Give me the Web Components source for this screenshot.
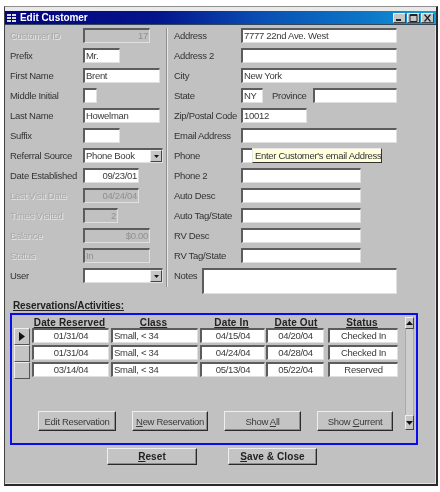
<!DOCTYPE html>
<html><head><meta charset="utf-8">
<style>
html,body{margin:0;padding:0;background:#fff;}
body{width:440px;height:492px;overflow:hidden;font-family:"Liberation Sans",Arial,sans-serif;font-size:9.5px;color:#333;}
</style></head><body>
<edit-window>
  <span slot="title">Edit Customer</span>
  <form-col slot="left">
    <form-row label="Customer ID" off><sunk-field w="67" align="right" off>17</sunk-field></form-row>
    <form-row label="Prefix"><sunk-field w="37">Mr.</sunk-field></form-row>
    <form-row label="First Name"><sunk-field w="77">Brent</sunk-field></form-row>
    <form-row label="Middle Initial"><sunk-field w="14"></sunk-field></form-row>
    <form-row label="Last Name"><sunk-field w="77">Howelman</sunk-field></form-row>
    <form-row label="Suffix"><sunk-field w="37"></sunk-field></form-row>
    <form-row label="Referral Source"><sunk-field w="80" combo>Phone Book</sunk-field></form-row>
    <form-row label="Date Established"><sunk-field w="56" align="right">09/23/01</sunk-field></form-row>
    <form-row label="Last Visit Date" off><sunk-field w="56" align="right" off>04/24/04</sunk-field></form-row>
    <form-row label="Times Visited" off><sunk-field w="35" align="right" off>2</sunk-field></form-row>
    <form-row label="Balance" off><sunk-field w="67" align="right" off>$0.00</sunk-field></form-row>
    <form-row label="Status" off><sunk-field w="67" off>In</sunk-field></form-row>
    <form-row label="User"><sunk-field w="80" combo></sunk-field></form-row>
  </form-col>
  <form-col slot="right">
    <form-row wide label="Address"><sunk-field w="156">7777 22nd Ave. West</sunk-field></form-row>
    <form-row wide label="Address 2"><sunk-field w="156"></sunk-field></form-row>
    <form-row wide label="City"><sunk-field w="156">New York</sunk-field></form-row>
    <form-row wide label="State"><sunk-field w="22">NY</sunk-field><span class="p" style="margin:0 8px 0 9px;width:33px">Province</span><sunk-field w="84"></sunk-field></form-row>
    <form-row wide label="Zip/Postal Code"><sunk-field w="66">10012</sunk-field></form-row>
    <form-row wide label="Email Address"><sunk-field w="156"></sunk-field></form-row>
    <form-row wide label="Phone"><sunk-field w="120"></sunk-field><tool-tip>Enter Customer's email Address</tool-tip></form-row>
    <form-row wide label="Phone 2"><sunk-field w="120"></sunk-field></form-row>
    <form-row wide label="Auto Desc"><sunk-field w="120"></sunk-field></form-row>
    <form-row wide label="Auto Tag/State"><sunk-field w="120"></sunk-field></form-row>
    <form-row wide label="RV Desc"><sunk-field w="120"></sunk-field></form-row>
    <form-row wide label="RV Tag/State"><sunk-field w="120"></sunk-field></form-row>
    <form-row notes label="Notes"><sunk-field w="195" h="26"></sunk-field></form-row>
  </form-col>
  <span slot="section">Reservations/Activities:</span>
  <res-panel slot="panel">
    <res-row slot="rows" sel d1="01/31/04" cls="Small, < 34" d2="04/15/04" d3="04/20/04" st="Checked In"></res-row>
    <res-row slot="rows" d1="01/31/04" cls="Small, < 34" d2="04/24/04" d3="04/28/04" st="Checked In"></res-row>
    <res-row slot="rows" d1="03/14/04" cls="Small, < 34" d2="05/13/04" d3="05/22/04" st="Reserved"></res-row>
    <raised-btn slot="btns" w="78" h="20"><span>Edit Reservation</span></raised-btn>
    <raised-btn slot="btns" w="76" h="20"><span><u>N</u>ew Reservation</span></raised-btn>
    <raised-btn slot="btns" w="77" h="20"><span>Show <u>A</u>ll</span></raised-btn>
    <raised-btn slot="btns" w="76" h="20"><span>Show <u>C</u>urrent</span></raised-btn>
  </res-panel>
  <raised-btn slot="foot" w="90" h="17" bold><span><u>R</u>eset</span></raised-btn>
  <raised-btn slot="foot" w="89" h="17" bold><span><u>S</u>ave &amp; Close</span></raised-btn>
</edit-window>
<script>
function def(name,css,html,init){
  customElements.define(name,class extends HTMLElement{
    connectedCallback(){
      if(this.shadowRoot)return;
      const r=this.attachShadow({mode:'open'});
      r.innerHTML='<style>'+css+'</style>'+(typeof html==='function'?html(this):html);
      if(init)init(this,r);
    }
  });
}
const esc=s=>(s||'').replace(/&/g,'&amp;').replace(/</g,'&lt;');
def('edit-window',`
:host{display:block;box-sizing:border-box;width:434px;height:480px;margin:6px 0 0 4px;background:#c1c1c1;border-top:1px solid #8f8f8f;border-left:1px solid #444;border-right:2px solid #2a2a2a;border-bottom:2px solid #2a2a2a;box-shadow:inset -1px -1px 0 #e2e2e2;filter:blur(.5px);font-family:"Liberation Sans",Arial,sans-serif;font-size:9.5px;letter-spacing:-.3px;}
.band{height:4px;background:#e9e9e9;}
.title{height:13px;display:flex;align-items:center;gap:4px;padding:0 2px 0 2px;background:linear-gradient(90deg,#03037e 0%,#04148a 35%,#0a50b4 60%,#0c78c8 85%,#14a0d8 100%);color:#fff;font-weight:bold;font-size:10px;letter-spacing:-.05px;border-bottom:1px solid #33475c;}
.name{flex:1;}
.ctl{width:13px;height:10px;box-sizing:border-box;background:#c6c6c6;border:1px solid;border-color:#eee #444 #444 #eee;display:flex;align-items:center;justify-content:center;}
.ctls{display:flex;gap:1px;}
.form{display:flex;padding:3px 0 0 5px;height:269px;}
.l{width:156px;flex:none;}
.sep{width:1px;height:259px;background:#8f8f8f;border-right:1px solid #e6e6e6;flex:none;}
.r{margin-left:6px;}
.sec{height:16px;padding-left:8px;font-weight:bold;font-size:10px;text-decoration:underline;display:flex;align-items:center;letter-spacing:-.1px;color:#222;}
.pan{padding-left:5px;}
.foot{display:flex;gap:31px;padding:3px 0 0 102px;}
`,`<div class="band"></div><div class="title"><svg width="9" height="8" viewBox="0 0 9 8"><path fill="#ddd" d="M0 0h4v2H0zM5 0h4v2H5zM0 3h4v2H0zM5 3h4v2H5zM0 6h4v2H0zM5 6h4v2H5z"/></svg><span class="name"><slot name="title"></slot></span>
<div class="ctls"><div class="ctl"><svg width="9" height="7" viewBox="0 0 9 7"><path d="M1 5h5v2H1z" fill="#222"/></svg></div><div class="ctl"><svg width="9" height="8" viewBox="0 0 9 8"><path d="M1 .5h7v7H1zM1 1.500h7" fill="none" stroke="#222"/></svg></div><div class="ctl"><svg width="9" height="8" viewBox="0 0 9 8"><path d="M1.500 .5l6 7M7.500 .5l-6 7" fill="none" stroke="#222" stroke-width="1.300"/></svg></div></div></div>
<div class="form"><div class="l"><slot name="left"></slot></div><div class="sep"></div><div class="r"><slot name="right"></slot></div></div>
<div class="sec"><slot name="section"></slot></div>
<div class="pan"><slot name="panel"></slot></div>
<div class="foot"><slot name="foot"></slot></div>`);
def('form-col',`:host{display:block;}`,`<slot></slot>`);
def('form-row',`
:host{display:flex;align-items:flex-start;height:20px;position:relative;color:#333;}
:host([notes]){height:27px;}
.lab{width:73px;flex:none;height:15px;line-height:15px;white-space:nowrap;}
:host([wide]) .lab{width:67px;}
:host([notes]) .lab{width:28px;}
:host([off]) .lab{color:#a8a8a8;text-shadow:1px 1px 0 #e8e8e8;}
::slotted(.p){line-height:15px;white-space:nowrap;}
`,h=>`<span class="lab">${esc(h.getAttribute('label'))}</span><slot></slot>`);
def('sunk-field',`
:host{display:block;box-sizing:border-box;flex:none;height:15px;background:#fff;border:2px solid #5c5c5c;border-right:1px solid #e0e0e0;border-bottom:1px solid #e0e0e0;line-height:12px;padding:0 1px;white-space:nowrap;overflow:hidden;color:#3a3a3a;position:relative;}
:host([off]){background:#c1c1c1;color:#909090;}
:host([combo]){padding-right:12px;}
.arr{position:absolute;right:0;top:0;width:12px;height:12px;box-sizing:border-box;background:#c6c6c6;border:1px solid;border-color:#eee #444 #444 #eee;display:flex;align-items:center;justify-content:center;}
`,h=>`<slot></slot>`+(h.hasAttribute('combo')?`<span class="arr"><svg width="5" height="3" viewBox="0 0 5 3"><path d="M0 0h5L2.500 3z" fill="#111"/></svg></span>`:''),
(h,r)=>{h.style.width=h.getAttribute('w')+'px';if(h.getAttribute('h'))h.style.height=h.getAttribute('h')+'px';if(h.getAttribute('align'))h.style.textAlign=h.getAttribute('align');});
def('tool-tip',`
:host{position:absolute;left:78px;top:0;width:130px;height:15px;box-sizing:border-box;background:#ffffdc;border:1px solid #e8e8e8;border-right:1px solid #333;border-bottom:1px solid #333;line-height:13px;padding-left:2px;white-space:nowrap;color:#333;}
`,`<slot></slot>`);
def('res-panel',`
:host{display:flex;box-sizing:border-box;width:408px;height:132px;border:2px solid #0b0bf0;padding:2px 2px 0 2px;}
.main{flex:1;display:flex;flex-direction:column;}
.hd{display:flex;height:11px;margin-left:16px;font-weight:bold;font-size:10px;letter-spacing:.15px;text-decoration:underline;line-height:11px;text-align:center;color:#222;}
.hd span{flex:none;}
.rows{display:block;}
.btns{display:flex;margin:32px 0 0 24px;gap:16px;}
.sb{width:13px;height:113px;margin-left:5px;display:flex;flex-direction:column;background:#c8c8c8;}
.b{height:12px;flex:none;box-sizing:border-box;background:#c6c6c6;border:1px solid;border-color:#eee #444 #444 #eee;display:flex;align-items:center;justify-content:center;}
.t{flex:1;border-left:1px solid #aaa;border-right:1px solid #aaa;background:#cdcdcd;}
`,`<div class="main"><div class="hd"><span style="width:79px">Date Reserved</span><span style="width:89px">Class</span><span style="width:67px">Date In</span><span style="width:62px">Date Out</span><span style="width:70px">Status</span></div>
<div class="rows"><slot name="rows"></slot></div><div class="btns"><slot name="btns"></slot></div></div>
<div class="sb"><div class="b"><svg width="7" height="4" viewBox="0 0 7 4"><path d="M3.500 0L7 4H0z" fill="#111"/></svg></div><div class="t"></div><div class="b" style="height:15px"><svg width="7" height="4" viewBox="0 0 7 4"><path d="M0 0h7L3.500 4z" fill="#111"/></svg></div></div>`);
def('res-row',`
:host{display:flex;height:17px;align-items:flex-start;}
.sel{width:16px;height:17px;box-sizing:border-box;background:#c4c4c4;border:1px solid;border-color:#eee #555 #555 #eee;margin-right:2px;display:flex;align-items:center;justify-content:center;flex:none;}
.f{height:15px;box-sizing:border-box;flex:none;background:#fff;border:2px solid #5c5c5c;border-right:1px solid #e0e0e0;border-bottom:1px solid #e0e0e0;line-height:12px;text-align:center;white-space:nowrap;overflow:hidden;color:#3a3a3a;margin-right:2px;}
`,h=>{const a=k=>esc(h.getAttribute(k));return `<div class="sel">${h.hasAttribute('sel')?'<svg width="6" height="9" viewBox="0 0 6 9"><path d="M0 0l6 4.500L0 9z" fill="#111"/></svg>':''}</div>
<div class="f" style="width:77px">${a('d1')}</div><div class="f" style="width:87px;text-align:left;padding-left:1px">${a('cls')}</div><div class="f" style="width:65px;margin-right:1px">${a('d2')}</div><div class="f" style="width:58px;margin-right:4px">${a('d3')}</div><div class="f" style="width:70px">${a('st')}</div>`});
def('raised-btn',`
:host{display:flex;box-sizing:border-box;align-items:center;justify-content:center;flex:none;background:#c4c4c4;border:1px solid;border-color:#eee #2a2a2a #2a2a2a #eee;box-shadow:inset -1px -1px 0 #8c8c8c;white-space:nowrap;color:#3a3a3a;}
:host([bold]){font-weight:bold;font-size:10px;letter-spacing:.1px;color:#222;}
`,`<slot></slot>`,h=>{h.style.width=h.getAttribute('w')+'px';h.style.height=h.getAttribute('h')+'px';});
</script>
</body></html>
